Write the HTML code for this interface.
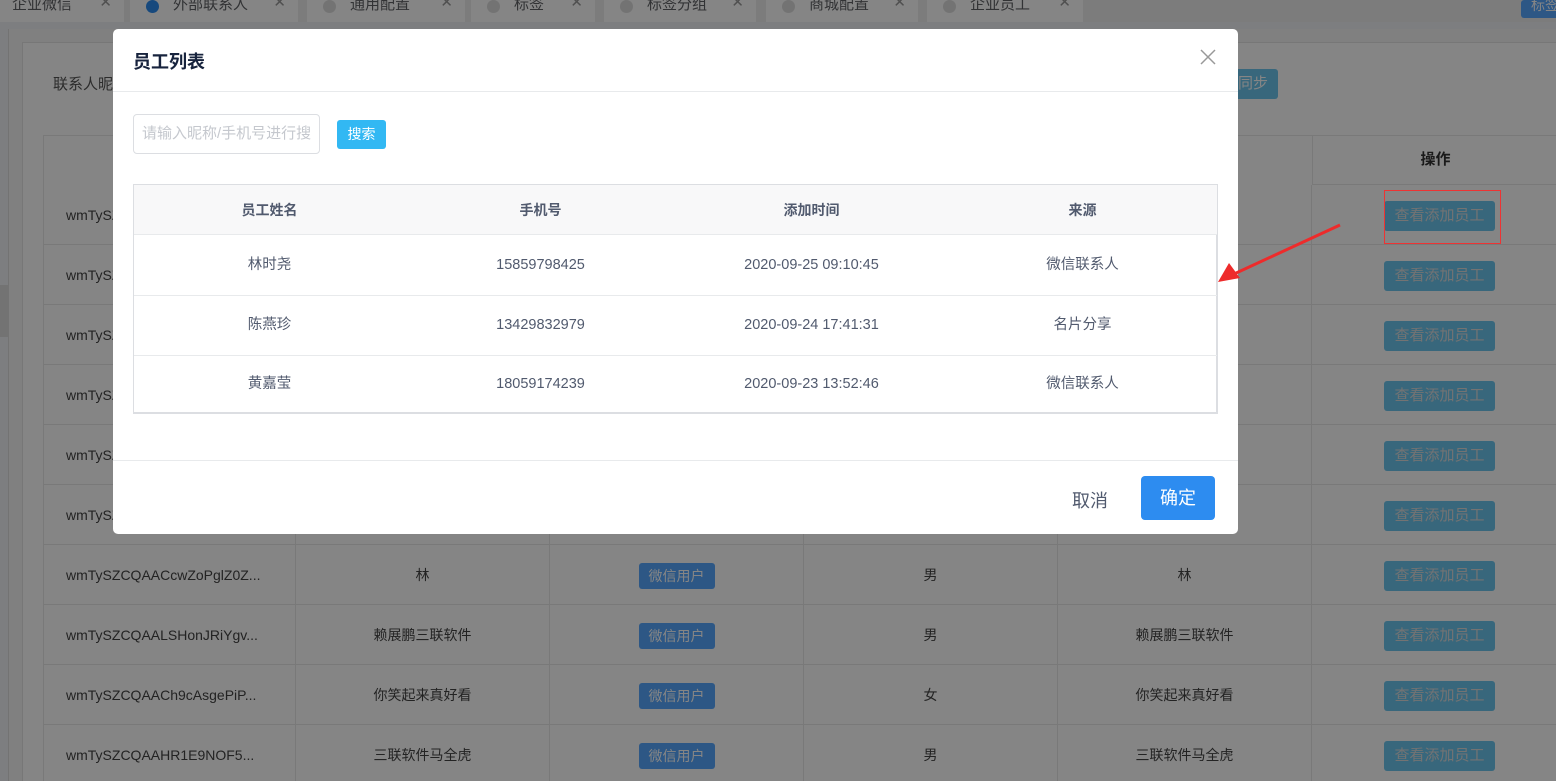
<!DOCTYPE html>
<html><head><meta charset="utf-8"><style>
*{margin:0;padding:0;box-sizing:border-box}
html,body{width:1556px;height:781px;overflow:hidden}
body{position:relative;background:#f0f2f5;font-family:"Liberation Sans","Noto Sans CJK SC",sans-serif;font-size:14px;color:#606266}
.a{position:absolute}
.tab{position:absolute;top:0;height:22px;background:#fff;font-size:15px;color:#606266;line-height:10px;padding-left:12px}
.tab .x{position:absolute;right:12px;top:-2px;color:#999}
.dot{display:inline-block;width:13px;height:13px;border-radius:50%;background:#ddd;margin:0 14px 0 4px;vertical-align:top}
.cell{position:absolute;height:60px;border-right:1px solid #e8e8e8;border-bottom:1px solid #e8e8e8;text-align:center;line-height:60px;color:#444;background:#fff;font-size:14px}
.badge{display:inline-block;background:#57a8ff;color:#fff;height:26px;line-height:26px;padding:0 10px;border-radius:3px;vertical-align:middle;font-size:14px}
.op{display:inline-block;background:#6cc6ee;color:#ddd;height:30px;line-height:30px;padding:0 10px;border-radius:3px;vertical-align:middle;font-size:15px}
.ov{position:absolute;left:0;top:0;width:1556px;height:781px;background:rgba(0,0,0,0.48)}
.dlg{position:absolute;left:113px;top:29px;width:1125px;height:505px;background:#fff;border-radius:5px}
.th,.td{position:absolute;width:271px;text-align:center;color:#515a6e}
.th{font-weight:bold;color:#515a6e;line-height:50px}
.td{line-height:60px;font-size:14.5px}
</style></head><body>
<div class="a" style="left:0;top:0;width:1556px;height:22px;background:#eee"></div>
<div class="tab" style="left:0;width:124px">企业微信<span class="x">✕</span></div>
<div class="tab" style="left:130px;width:168px"><span class="dot" style="background:#2d8cf0"></span>外部联系人<span class="x">✕</span></div>
<div class="tab" style="left:307px;width:158px"><span class="dot"></span>通用配置<span class="x">✕</span></div>
<div class="tab" style="left:471px;width:124px"><span class="dot"></span>标签<span class="x">✕</span></div>
<div class="tab" style="left:604px;width:152px"><span class="dot"></span>标签分组<span class="x">✕</span></div>
<div class="tab" style="left:766px;width:152px"><span class="dot"></span>商城配置<span class="x">✕</span></div>
<div class="tab" style="left:927px;width:156px"><span class="dot"></span>企业员工<span class="x">✕</span></div>
<div class="a" style="left:1521px;top:0;width:40px;height:18px;background:#57a8ff;border-radius:3px;color:#fff;font-size:14px;line-height:10px;padding-left:10px">标签</div>
<div class="a" style="left:8px;top:29px;width:1548px;height:752px;background:#f5f5f5;border-left:1px solid #ddd"></div>
<div class="a" style="left:22px;top:42px;width:1534px;height:739px;background:#fff;border-left:1px solid #e5e5e5;border-top:1px solid #e5e5e5"></div>
<div class="a" style="left:0;top:285px;width:8px;height:52px;background:#ddd"></div>
<div class="a" style="left:53px;top:73px;font-size:15px;color:#555">联系人昵称</div>
<div class="a" style="left:1210px;top:69px;width:68px;height:30px;background:#6cc6ee;border-radius:3px;color:#fff;font-size:15px;line-height:30px;padding-left:28px">同步</div>
<div class="a" style="left:43px;top:135px;width:1513px;height:50px;background:#fff;border-top:1px solid #e8e8e8;border-left:1px solid #e8e8e8"></div>
<div class="a" style="left:1312px;top:135px;width:256px;height:50px;border-left:1px solid #e8e8e8;border-bottom:1px solid #e8e8e8;text-align:center;line-height:50px;font-weight:bold;color:#333;font-size:15px;padding-right:10px">操作</div>
<div id="rows"></div>
<script>
var data=[[],[],[],[],[],[],
["wmTySZCQAACcwZoPglZ0Z...","林","","男","林"],["wmTySZCQAALSHonJRiYgv...","赖展鹏三联软件","","男","赖展鹏三联软件"],["wmTySZCQAACh9cAsgePiP...","你笑起来真好看","","女","你笑起来真好看"],["wmTySZCQAAHR1E9NOF5...","三联软件马全虎","","男","三联软件马全虎"]];
var xs=[43,296,550,804,1058,1312],h="";
for(var r=0;r<10;r++){var y=185+r*60;
for(var c=0;c<6;c++){var w=c<5?xs[c+1]-xs[c]:256;var t="";
if(c==0)t=r<6?'<span style="position:absolute;left:22px">wmTySZCQAA</span>':'<span style="position:absolute;left:22px">'+data[r][0]+'</span>';
else if(c==2)t=r<6?'':'<span class="badge">微信用户</span>';
else if(c==5)t='<span class="op">查看添加员工</span>';
else if(r>=6)t=c==1?data[r][1]:c==3?data[r][3]:data[r][4];
h+='<div class="cell" style="left:'+xs[c]+'px;top:'+y+'px;width:'+w+'px;'+(c==0?'border-left:1px solid #e8e8e8;':'')+'">'+t+'</div>';}}
document.getElementById('rows').innerHTML=h;
</script>
<div class="ov"></div>
<div class="dlg">
<div class="a" style="left:20px;top:19px;font-size:18px;font-weight:bold;color:#17233d">员工列表</div>
<svg class="a" style="left:1087px;top:20px" width="16" height="16"><path d="M1 1L15 15M15 1L1 15" stroke="#999" stroke-width="1.5"/></svg>
<div class="a" style="left:0;top:62px;width:1125px;height:1px;background:#e8eaec"></div>
<div class="a" style="left:20px;top:85px;width:187px;height:40px;border:1px solid #dcdee2;border-radius:4px;color:#c5c8ce;font-size:15px;line-height:38px;padding-left:8px;white-space:nowrap;overflow:hidden">请输入昵称/手机号进行搜</div>
<div class="a" style="left:224px;top:91px;width:49px;height:29px;background:#32b8f3;border-radius:3px;color:#fff;font-size:14px;line-height:29px;text-align:center">搜索</div>
<div class="a" style="left:20px;top:155px;width:1085px;height:230px;border:1px solid #dcdee2;border-right:2px solid #dcdee2;border-bottom:2px solid #dcdee2">
<div class="a" style="left:0;top:0;width:1083px;height:50px;background:#f8f8f9;border-bottom:1px solid #e8eaec"></div>
<div class="th" style="left:0;top:0">员工姓名</div><div class="th" style="left:271px;top:0">手机号</div><div class="th" style="left:542px;top:0">添加时间</div><div class="th" style="left:813px;top:0">来源</div>
<div class="a" style="left:0;top:110px;width:1083px;height:1px;background:#e8eaec"></div>
<div class="a" style="left:0;top:170px;width:1083px;height:1px;background:#e8eaec"></div>
<div class="td" style="left:0;top:50px">林时尧</div><div class="td" style="left:271px;top:50px">15859798425</div><div class="td" style="left:542px;top:50px">2020-09-25 09:10:45</div><div class="td" style="left:813px;top:50px">微信联系人</div>
<div class="td" style="left:0;top:110px">陈燕珍</div><div class="td" style="left:271px;top:110px">13429832979</div><div class="td" style="left:542px;top:110px">2020-09-24 17:41:31</div><div class="td" style="left:813px;top:110px">名片分享</div>
<div class="td" style="left:0;top:169px">黄嘉莹</div><div class="td" style="left:271px;top:169px">18059174239</div><div class="td" style="left:542px;top:169px">2020-09-23 13:52:46</div><div class="td" style="left:813px;top:169px">微信联系人</div>
</div>
<div class="a" style="left:0;top:431px;width:1125px;height:1px;background:#e8eaec"></div>
<div class="a" style="left:959px;top:458px;font-size:18px;color:#515a6e">取消</div>
<div class="a" style="left:1028px;top:447px;width:74px;height:44px;background:#2d8cf0;border-radius:4px;color:#fff;font-size:18px;line-height:44px;text-align:center">确定</div>
</div>
<div class="a" style="left:1384px;top:190px;width:117px;height:54px;border:1px solid #e33"></div>
<svg class="a" style="left:1210px;top:220px" width="140" height="70"><path d="M130 5L24 54" stroke="#ee2b2b" stroke-width="3" fill="none"/><polygon points="8,62 19,43 30,58" fill="#ee2b2b"/></svg>
</body></html>
